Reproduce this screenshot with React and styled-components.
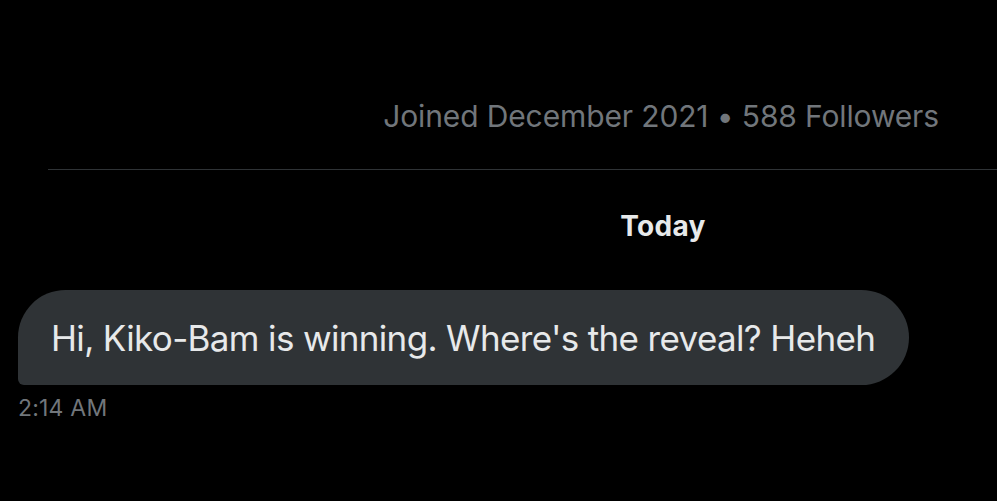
import React from "react";
import styled, { createGlobalStyle } from "styled-components";

const GlobalStyle = createGlobalStyle`
  html, body {
    margin: 0;
    padding: 0;
    background: #000;
  }
  body {
    font-family: Inter, Roboto, "Liberation Sans", sans-serif;
    -webkit-font-smoothing: antialiased;
  }
`;

const Screen = styled.div`
  width: 997px;
  height: 501px;
  background: #000;
  overflow: hidden;
  display: flex;
  flex-direction: column;
`;

const ProfileInfo = styled.div`
  display: flex;
  justify-content: flex-end;
  padding: 96px 58px 0 0;
  height: 40px;
  font-size: 30px;
  letter-spacing: -0.13px;
  color: #71767b;
  line-height: 40px;
`;

const Divider = styled.div`
  margin: 33px 0 0 48px;
  height: 1px;
  background: #2f3336;
`;

const DayLabel = styled.div`
  margin-top: 38px;
  padding-left: 329px;
  text-align: center;
  font-size: 28px;
  font-weight: 700;
  letter-spacing: 0.3px;
  color: #e7e9ea;
  line-height: 36px;
`;

const MessageRow = styled.div`
  margin-top: 46px;
  padding-left: 18px;
  display: flex;
  flex-direction: column;
  align-items: flex-start;
`;

const Bubble = styled.div`
  background: #2f3336;
  border-radius: 48px 48px 48px 6px;
  height: 95px;
  padding: 0 34px 0 33px;
  display: flex;
  align-items: center;
  font-size: 35px;
  letter-spacing: -0.65px;
  color: #e7e9ea;
`;

const Timestamp = styled.div`
  margin-top: 10px;
  font-size: 23px;
  letter-spacing: 0.2px;
  color: #71767b;
  line-height: 26px;
`;

export default function App() {
  return (
    <>
      <GlobalStyle />
      <Screen>
        <ProfileInfo>Joined December 2021 • 588 Followers</ProfileInfo>
        <Divider />
        <DayLabel>Today</DayLabel>
        <MessageRow>
          <Bubble>Hi, Kiko-Bam is winning. Where's the reveal? Heheh</Bubble>
          <Timestamp>2:14 AM</Timestamp>
        </MessageRow>
      </Screen>
    </>
  );
}
